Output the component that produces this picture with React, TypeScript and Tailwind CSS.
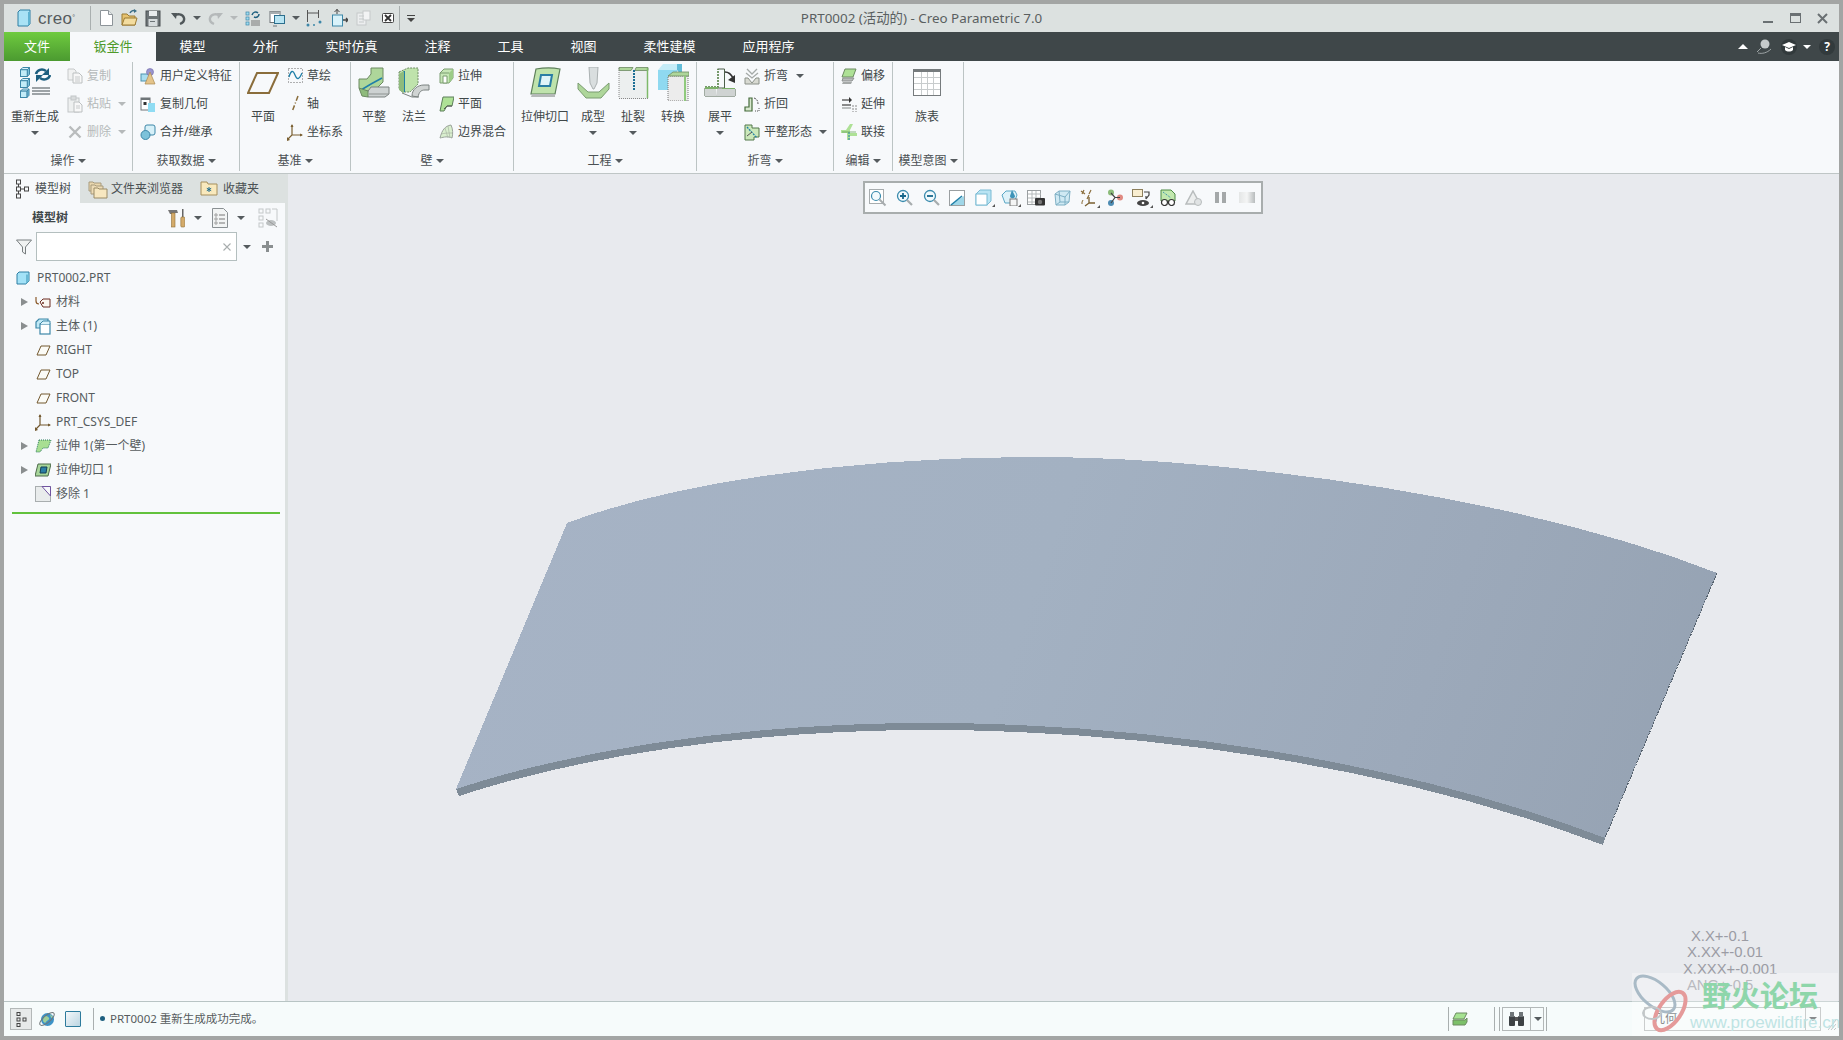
import type { ReactNode } from 'react'

// Creo Parametric 7.0 main window, sheet metal tab

const I = ({ w, h, children }: { w: number; h: number; children: ReactNode }) => (
  <svg width={w} height={h} viewBox={`0 0 ${w} ${h}`} className="block shrink-0">
    {children}
  </svg>
)

const Caret = ({ color = 'border-t-[#555b5e]' }: { color?: string }) => (
  <span className={`inline-block w-0 h-0 border-x-[4px] border-x-transparent border-t-[4px] ${color}`} />
)

const GreyCaret = () => <Caret color="border-t-[#b5b9ba]" />

function Cube({ x, y, s }: { x: number; y: number; s: number }) {
  const d = s * 0.25
  return (
    <g>
      <polygon points={`${x},${y + d} ${x + d},${y} ${x + s},${y} ${x + s - d},${y + d}`} fill="#d9f2fa" stroke="#3d87a8" strokeWidth="1" />
      <polygon points={`${x + s - d},${y + d} ${x + s},${y} ${x + s},${y + s - d} ${x + s - d},${y + s}`} fill="#7cc0da" stroke="#3d87a8" strokeWidth="1" />
      <rect x={x} y={y + d} width={s - d} height={s - d} fill="#c2ecf8" stroke="#3d87a8" strokeWidth="1" />
    </g>
  )
}

/* quick access */
const QaNew = () => (
  <I w={15} h={18}>
    <path d="M1.5 1.5h8l4 4v11h-12z" fill="#fff" stroke="#8d9499" />
    <path d="M9.5 1.5v4h4" fill="#e6eaec" stroke="#8d9499" />
  </I>
)
const QaOpen = () => (
  <I w={17} h={18}>
    <path d="M1 5h5l2 2h6v9H1z" fill="#e6c270" stroke="#9b7a33" />
    <path d="M3.5 9H16l-2 7H1z" fill="#f3dc9f" stroke="#9b7a33" />
    <path d="M9 4c1-2 3-3 5-2" fill="none" stroke="#3b6d85" strokeWidth="1.5" />
    <path d="M13 0l3 2-3 2z" fill="#3b6d85" />
  </I>
)
const QaSave = () => (
  <I w={16} h={18}>
    <rect x="1" y="2" width="14" height="15" fill="#6e7578" stroke="#4a5053" />
    <rect x="4" y="2" width="8" height="5" fill="#e9ecee" />
    <rect x="3.5" y="10" width="9" height="7" fill="#d7dcde" />
    <rect x="5" y="12" width="5" height="1" fill="#6e7578" />
  </I>
)
const Undo = ({ c, flip }: { c: string; flip?: boolean }) => (
  <I w={16} h={16}>
    <g transform={flip ? 'translate(16 0) scale(-1 1)' : undefined}>
      <path d="M4 6c3-3 9-2 10 2 .6 3-1.500 5-4 6" fill="none" stroke={c} strokeWidth="2.4" />
      <path d="M1 3l6 0-1 6z" fill={c} />
    </g>
  </I>
)
const QaRegen = () => (
  <I w={16} h={17}>
    <rect x="1" y="2" width="3" height="3" fill="#9fdcf0" stroke="#3d87a8" strokeWidth=".7" />
    <rect x="1" y="7" width="3" height="3" fill="#9fdcf0" stroke="#3d87a8" strokeWidth=".7" />
    <rect x="1" y="12" width="3" height="3" fill="#9fdcf0" stroke="#3d87a8" strokeWidth=".7" />
    <path d="M6 13h9M6 15h9M6 11h9" stroke="#777" />
    <path d="M7 5c1-3 4-4 6-2M14 4c0 3-3 4-5 3" fill="none" stroke="#1d5f7f" strokeWidth="1.500" />
  </I>
)
const QaWindows = () => (
  <I w={17} h={17}>
    <rect x="1" y="1.500" width="10" height="11" fill="#fff" stroke="#6e7578" />
    <rect x="1" y="1.500" width="10" height="2.500" fill="#a6adb0" />
    <rect x="5.500" y="5.500" width="10" height="8" fill="#b9e5f3" stroke="#2c6f8e" />
    <path d="M4 16h4" stroke="#6e7578" />
  </I>
)
const QaDim = () => (
  <I w={17} h={18}>
    <path d="M1.500 1v12M12.500 1v8M1.500 4h11" stroke="#555" />
    <circle cx="2" cy="16" r="1.500" fill="#3d87a8" />
    <circle cx="8" cy="16" r="1" fill="#3d87a8" />
    <circle cx="14" cy="13" r="1.500" fill="#3d87a8" />
  </I>
)
const QaBox = () => (
  <I w={17} h={18}>
    <rect x="1.500" y="6" width="10" height="11" fill="#d9f2fa" stroke="#3d87a8" />
    <path d="M6 0v5M3.500 3L6 .5 8.500 3" fill="none" stroke="#444" />
    <path d="M12 11h4M15 9l2 2-2 2" fill="none" stroke="#444" strokeWidth="1.300" />
  </I>
)
const QaGhost = () => (
  <I w={17} h={18}>
    <rect x="2" y="4" width="9" height="12" fill="#eceeef" stroke="#c5c9ca" />
    <rect x="8" y="2" width="7" height="9" fill="#f2f3f4" stroke="#c5c9ca" />
    <path d="M4 7h5M4 10h5M4 13h5" stroke="#c5c9ca" />
  </I>
)
const QaClose = () => (
  <I w={12} h={12}>
    <rect x=".5" y="1.500" width="11" height="9" rx="1" fill="#fff" stroke="#444" />
    <path d="M3 3l6 6M9 3l-6 6" stroke="#333" strokeWidth="1.800" />
  </I>
)

/* ribbon: large */
const IcRegenLarge = () => (
  <I w={31} h={31}>
    <Cube x={.5} y={.5} s={9} />
    <Cube x={.5} y={11.500} s={9} />
    <Cube x={.5} y={22} s={8.500} />
    <path d="M12 21h18M12 24h18M12 27h18" stroke="#80878a" strokeWidth="1.300" />
    <path d="M16 7c1-4 6-6 10-3" fill="none" stroke="#1d5f7f" strokeWidth="2.600" />
    <path d="M29 1v7h-7z" fill="#1d5f7f" />
    <path d="M30 8c-1 4-6 6-10 3" fill="none" stroke="#1d5f7f" strokeWidth="2.600" />
    <path d="M16 15V8h7z" fill="#1d5f7f" />
  </I>
)
const IcPlane = () => (
  <I w={32} h={22}>
    <polygon points="10,1 31,1 22,21 1,21" fill="none" stroke="#8a6d3b" strokeWidth="2" />
  </I>
)
const IcFlat = () => (
  <I w={32} h={31}>
    <path d="M1 12h8l4-5V1h12v14l-9 9H4l-3-3z" fill="#aed69a" stroke="#6c8a62" />
    <path d="M3 23l10-6 11-6" fill="none" stroke="#1f7fa8" strokeWidth="1.500" />
    <path d="M8 27l5-7h18v7l-4 3H10z" fill="#cdd2d2" stroke="#7b8280" />
    <path d="M1 21l3 8 6 1V24z" fill="#8fbb7c" stroke="#6c8a62" />
    <path d="M11 27h20" stroke="#8d9391" />
  </I>
)
const IcFlange = () => (
  <I w={32} h={31}>
    <path d="M1 5l9-4h10v16l-8 8H4l-3-3z" fill="#bfe3ac" stroke="#6c8a62" strokeDasharray="2 1" />
    <path d="M6 4v21" stroke="#1f7fa8" strokeWidth="2" />
    <path d="M1 7l5-3v22l-5-3z" fill="#8fbb7c" />
    <path d="M14 29c0-7 6-11 12-11h5v5h-4c-4 0-6 2-7 7z" fill="#d0d4d3" stroke="#7b8280" />
    <path d="M4 26l10 4h7" fill="none" stroke="#7b8280" />
  </I>
)
const IcExtrudeCut = () => (
  <I w={31} h={31}>
    <path d="M6 2c8-1.500 17-1.500 24 0l-5 25H1z" fill="#bfe3ac" stroke="#5d7f5a" strokeWidth="1.200" />
    <path d="M2 27h23v3H1z" fill="#b5b9b8" />
    <path d="M11 8h11l-2 11H9z" fill="#e0f4f9" stroke="#2a7ea5" strokeWidth="2" />
  </I>
)
const IcForming = () => (
  <I w={33} h={32}>
    <path d="M12 0h9l-1 16-3 6h-1l-3-6z" fill="#d9dedf" stroke="#aab0b1" />
    <path d="M1 16l10 9h11l10-9v6l-8 9H9L1 22z" fill="#aed69a" stroke="#7a9c70" />
  </I>
)
const IcRip = () => (
  <I w={31} h={32}>
    <rect x="1" y="1" width="29" height="31" fill="#ecefef" />
    <path d="M1 .5h14l-2 3H1zM18 .5h12v3H17z" fill="#aed69a" stroke="#6c8a62" strokeWidth=".8" />
    <path d="M29.500 1v30" stroke="#7eb96a" strokeWidth="1.500" />
    <path d="M1 31.500h29" stroke="#888" strokeDasharray="1 1" />
    <path d="M1 1v30" stroke="#888" strokeDasharray="1 1" />
    <path d="M16 3v20" stroke="#1d6f95" strokeWidth="2" strokeDasharray="2 1" />
  </I>
)
const IcConvert = () => (
  <I w={32} h={37}>
    <polygon points="1,6 20,6 20,26 1,26" fill="#8fd9f0" />
    <polygon points="1,6 6,0 20,0 20,6" fill="#c5ecf7" />
    <polygon points="20,6 20,0 25,0 25,12" fill="#62bcd8" />
    <rect x="11" y="12" width="20" height="25" fill="#ececec" stroke="#777" strokeDasharray="1 1" />
    <path d="M11 12l5-4h16v4z" fill="#aed69a" stroke="#6c8a62" strokeWidth=".8" />
    <path d="M28 12v25" stroke="#8fc97c" strokeWidth="2" />
  </I>
)
const IcUnbend = () => (
  <I w={32} h={31}>
    <path d="M13.500 2h7v19H1v8h30v-7H20.500" fill="none" stroke="#4d5f4a" />
    <path d="M1 22h11v7H1z" fill="#d2d6d5" />
    <path d="M13 22l7 0 11 0v7H12z" fill="#cfd3d2" />
    <path d="M1 20h13v-18" fill="none" stroke="#4e7b3e" strokeWidth="1.500" strokeDasharray="2 1" />
    <path d="M14 20H1v2h13zM18 22h13v-1H18z" fill="#7cb169" />
    <path d="M21 5c4 0 6 2 8 6" fill="none" stroke="#333" strokeWidth="1.600" />
    <path d="M31 8v8l-7-3z" fill="#333" />
  </I>
)
const IcTable = () => (
  <I w={28} h={27}>
    <rect x=".5" y=".5" width="27" height="26" fill="#fff" stroke="#767b7d" />
    <rect x="0" y="0" width="28" height="3" fill="#767b7d" />
    <path d="M1 8.500h26M1 14.500h26M1 20.500h26" stroke="#c8cccd" />
    <path d="M8.500 3v23M14.500 3v23M20.500 3v23" stroke="#c8cccd" />
  </I>
)

/* ribbon: small */
const IcCopy = () => (
  <I w={16} h={16}>
    <path d="M1 1h6l2 2v9H1z" fill="#f0f1f1" stroke="#c6c9ca" />
    <path d="M6 5h6l3 3v7H6z" fill="#f7f7f7" stroke="#bcc0c1" />
    <path d="M8 9h5M8 11h5M8 13h5" stroke="#c6c9ca" />
  </I>
)
const IcPaste = () => (
  <I w={16} h={18}>
    <rect x="1" y="3" width="11" height="14" fill="#eef0f0" stroke="#c2c6c7" />
    <rect x="4" y="1" width="5" height="4" fill="#d9dcdd" stroke="#c2c6c7" />
    <path d="M7 7h5l3 3v7H7z" fill="#f8f8f8" stroke="#bcc0c1" />
    <path d="M9 11h4M9 13h4" stroke="#c6c9ca" />
  </I>
)
const IcDelete = () => (
  <I w={14} h={14}>
    <path d="M1.500 1.500l11 11M12.500 1.500l-11 11" stroke="#b9bcbd" strokeWidth="2.400" />
  </I>
)
const IcUdf = () => (
  <I w={16} h={17}>
    <rect x="1" y="6" width="9" height="7" fill="#a9def0" stroke="#4e93ae" />
    <circle cx="10" cy="4" r="3.500" fill="#9a95cf" stroke="#6f6aa8" strokeWidth=".6" />
    <path d="M10 4l5 12H5z" fill="#e4c48a" stroke="#a98a51" strokeWidth=".7" />
  </I>
)
const IcCopyGeom = () => (
  <I w={16} h={17}>
    <rect x="1" y="2" width="9" height="12" fill="#fff" stroke="#6e7578" />
    <rect x="1" y="2" width="9" height="2" fill="#6e7578" />
    <rect x="3.500" y="6" width="3" height="3" fill="#333" />
    <rect x="8" y="7" width="7" height="9" fill="#8fdcf3" />
  </I>
)
const IcMerge = () => (
  <I w={16} h={17}>
    <rect x="5" y="1" width="10" height="10" rx="2" fill="#d6f0f8" stroke="#3d87a8" />
    <circle cx="5.500" cy="11" r="4.500" fill="#7cc2da" stroke="#3d87a8" />
  </I>
)
const IcSketch = () => (
  <I w={15} h={16}>
    <rect x=".5" y=".5" width="14" height="14" fill="none" stroke="#666" strokeDasharray="1 2" />
    <path d="M1 9c2-7 4-7 6-2s4 5 7-2" fill="none" stroke="#1f7fa8" strokeWidth="1.300" />
  </I>
)
const IcAxis = () => (
  <I w={15} h={18}>
    <path d="M10 1L4 17" stroke="#8a6d3b" strokeWidth="1.500" strokeDasharray="5 2 1 2" />
  </I>
)
const IcCsys = ({ c = '#7a5f30' }: { c?: string }) => (
  <I w={16} h={17}>
    <path d="M5 1v10l-4 4M5 11h10" fill="none" stroke={c} strokeWidth="1.200" />
    <path d="M3.500 3L5 0l1.500 3zM13 9.500l3 1.500-3 1.500z" fill={c} />
    <path d="M0 13l0 4 3-1z" fill={c} />
  </I>
)
const IcWallExtrude = () => (
  <I w={15} h={16}>
    <path d="M1 5l4-4h9v9l-4 5H1z" fill="#c6e6b6" stroke="#7a9c70" />
    <path d="M4 8h4v7H4z" fill="#fff" stroke="#7a9c70" />
    <path d="M10 5l4-4v9l-4 5z" fill="#9ccc87" />
    <path d="M1 5h9" stroke="#7a9c70" />
  </I>
)
const IcWallPlane = () => (
  <I w={15} h={16}>
    <path d="M4 1h11l-2 9H8l-3 5H1z" fill="#aee196" stroke="#5d7f5a" />
    <path d="M5 13l3-3h5" fill="none" stroke="#555" />
  </I>
)
const IcWallBlend = () => (
  <I w={15} h={16}>
    <path d="M1 14C3 6 6 2 12 1c2 4 2 9 1 13-4-2-8-1-12 0z" fill="#d9efce" stroke="#9aa39a" />
    <path d="M6 4l3 10M9 2l2 12M2 10c4-1 7-1 11-1" fill="none" stroke="#a9b5a5" strokeWidth=".7" />
  </I>
)
const IcBend = () => (
  <I w={16} h={17}>
    <path d="M3 1l5 5 5-5M2 5l6 5 6-5" fill="none" stroke="#a5aaa8" strokeWidth="1.300" />
    <path d="M1 10l3 0 4 5 4-5 3 0v6H1z" fill="#d8dad2" stroke="#8b9189" />
  </I>
)
const IcBendBack = () => (
  <I w={16} h={16}>
    <path d="M1 15V11h4V2h3v13z" fill="#d8e8cf" stroke="#456b3a" strokeWidth="1.200" />
    <path d="M10 2c3 1 4 3 4 6" fill="none" stroke="#555" strokeDasharray="2 1" />
    <path d="M11 15h4v-4" fill="none" stroke="#555" strokeDasharray="1 1" />
  </I>
)
const IcFlatState = () => (
  <I w={16} h={17}>
    <path d="M1 1h7v3h7v9h-5v3H1z" fill="#cbe8ba" stroke="#52784a" />
    <path d="M3 3l10 11" stroke="#1f7fa8" strokeWidth="1.300" strokeDasharray="2 1" />
    <path d="M3 12l5-4" stroke="#555" />
  </I>
)
const IcOffset = () => (
  <I w={16} h={17}>
    <path d="M4 1h11l-3 8H1z" fill="#aee196" stroke="#6c8a62" />
    <path d="M2 10h11l-2 3H1z" fill="#b9bcbb" stroke="#8d9190" />
    <path d="M2 14h9l-1 2H1z" fill="#a5a9a8" />
  </I>
)
const IcExtend = () => (
  <I w={16} h={17}>
    <path d="M1 4h9M1 9h9" stroke="#666" strokeWidth="1.300" />
    <path d="M8 1l3 3-3 3z" fill="#333" />
    <path d="M12 9v7M15 9v7" stroke="#888" strokeDasharray="2 1" />
    <path d="M1 12h9" stroke="#a8adad" strokeWidth="1.500" />
  </I>
)
const IcJoin = () => (
  <I w={16} h={18}>
    <path d="M6 17V10H0V7h5l4-6h3l-3 6v3l7 0v3H9v4z" fill="#aee196" />
    <path d="M8 9v8" stroke="#1f7fa8" strokeDasharray="2 1" />
    <path d="M1 9h14" stroke="#5d9950" strokeWidth=".7" />
  </I>
)

/* tree and panel */
const IcTreeDots = () => (
  <I w={14} h={20}>
    <rect x="1.500" y="1" width="4" height="4" fill="none" stroke="#444" />
    <rect x="1.500" y="8" width="4" height="4" fill="none" stroke="#444" />
    <rect x="1.500" y="15" width="4" height="4" fill="none" stroke="#444" />
    <rect x="9.500" y="8" width="4" height="4" fill="none" stroke="#444" />
    <path d="M3.500 5v3M3.500 12v3M5.500 10h4" stroke="#444" />
  </I>
)
const IcFolders = () => (
  <I w={20} h={20}>
    <path d="M1 3h4l1 1h7v8H1z" fill="#ead7ae" stroke="#a79a7c" />
    <path d="M3 6h4l1 1h7v8H3z" fill="#eedcb6" stroke="#a79a7c" />
    <path d="M6 9h4l1 1h8v9H6z" fill="#f7e7c0" stroke="#9a8b66" />
  </I>
)
const IcFav = () => (
  <I w={18} h={15}>
    <path d="M1 1h6l1 2h9v11H1z" fill="#f9e9bd" stroke="#a68f5c" />
    <path d="M9 6v5M6.800 7.300l4.400 2.400M11.200 7.300L6.800 9.700" stroke="#1d6a8c" strokeWidth="1" />
  </I>
)
const IcTools = () => (
  <I w={17} h={20}>
    <path d="M0 2h9l1 3H5v1H2z" fill="#777" />
    <rect x="3.500" y="5" width="3.500" height="14" fill="#d4ab6a" stroke="#8f6e38" strokeWidth=".6" />
    <rect x="14" y="1" width="1.500" height="8" fill="#666" />
    <rect x="12.800" y="9" width="4" height="10" rx="1" fill="#d4ab6a" stroke="#8f6e38" strokeWidth=".6" />
  </I>
)
const IcDocList = () => (
  <I w={16} h={20}>
    <path d="M.5.5h11l4 4v15H.5z" fill="#f2f4f4" stroke="#8a9093" />
    <circle cx="4" cy="7" r="1.200" fill="none" stroke="#777" strokeWidth=".7" />
    <circle cx="4" cy="11" r="1.200" fill="none" stroke="#777" strokeWidth=".7" />
    <circle cx="4" cy="15" r="1.200" fill="none" stroke="#777" strokeWidth=".7" />
    <path d="M7 7h6M7 11h6M7 15h6" stroke="#777" />
  </I>
)
const IcTreeEye = () => (
  <I w={20} h={20}>
    <g fill="none" stroke="#c4c8c9">
      <rect x="1" y="1" width="4" height="4" />
      <rect x="1" y="8" width="4" height="4" />
      <rect x="1" y="15" width="4" height="4" />
      <rect x="8" y="1" width="4" height="4" />
      <path d="M14 1h5v12" />
    </g>
    <ellipse cx="13" cy="15" rx="5" ry="3" fill="#bcc0c1" />
    <path d="M8 11l11 8" stroke="#999" />
  </I>
)
const IcFunnel = () => (
  <I w={16} h={16}>
    <path d="M.5 1h15L9.500 8v7l-3-2V8z" fill="#f0f2f2" stroke="#787e80" />
  </I>
)
const IcMaterial = () => (
  <I w={16} h={13}>
    <path d="M1 1v4c0 2 1 3 3 3" fill="none" stroke="#8b5a2b" strokeWidth="1.200" />
    <path d="M5 6l3-3h7v8H8z" fill="#fbf6f0" stroke="#6d2d22" />
    <circle cx="8" cy="7" r="1" fill="#6d2d22" />
  </I>
)
const IcBodies = () => (
  <I w={16} h={17}>
    <path d="M1 4l3-3h9v9H1z" fill="#bfe8f5" stroke="#3d87a8" strokeWidth="1.200" />
    <rect x="5" y="6" width="10" height="10" fill="#fff" stroke="#3d87a8" strokeWidth="1.200" />
    <path d="M5 6l3-3h7v3" fill="#d9f2fa" stroke="#3d87a8" />
  </I>
)
const IcTreePlane = () => (
  <I w={15} h={11}>
    <polygon points="5,1 14,1 10,10 1,10" fill="#fbfbf6" stroke="#72582e" strokeWidth="1" />
  </I>
)
const IcTreeExtrude = () => (
  <I w={17} h={14}>
    <path d="M4 1h12l-3 8H8l-3 4H1z" fill="#a8df92" stroke="#2a7a5c" strokeDasharray="1 1" />
  </I>
)
const IcTreeCut = () => (
  <I w={16} h={14}>
    <path d="M3 1h13l-3 12H0z" fill="#a8d69a" stroke="#4d6a4a" />
    <path d="M6 4h6l-1 6H5z" fill="#2a7ea5" stroke="#133f55" />
  </I>
)
const IcRemove = () => (
  <I w={16} h={16}>
    <rect x=".5" y=".5" width="15" height="15" fill="#e9ecec" stroke="#a9aeaf" />
    <path d="M7 .5h8.500V10z" fill="#f7f9fb" stroke="#7154a0" />
  </I>
)

/* graphics toolbar */
const Mag = ({ children }: { children?: ReactNode }) => (
  <I w={17} h={17}>
    <circle cx="7" cy="7" r="5.500" fill="#f2fafd" stroke="#3a8bad" strokeWidth="1.300" />
    <path d="M11 11l5 5" stroke="#a7acae" strokeWidth="2.200" />
    {children}
  </I>
)
const TbItem = ({ children, arrow }: { children: ReactNode; arrow?: boolean }) => (
  <div className="relative w-[26.300px] flex justify-center items-center">
    {children}
    {arrow && (
      <span className="absolute right-[2px] bottom-[-1px] w-0 h-0 border-l-[3px] border-l-transparent border-b-[3px] border-b-[#555]" />
    )}
  </div>
)

const labelFont = "font-['Noto_Sans','Noto_Sans_CJK_SC',sans-serif]"

function Group({ className, label, children }: { className: string; label: string; children: ReactNode }) {
  return (
    <div className={`flex flex-col h-[109px] shrink-0 border-r border-[#bcc4c4] ${className}`}>
      <div className="flex h-[89px]">{children}</div>
      <div className="h-[20px] flex items-center justify-center gap-[3px] text-[12px] text-[#4a5053]">
        <span>{label}</span>
        <Caret />
      </div>
    </div>
  )
}

function Large({ className, icon, label, arrow }: { className: string; icon: ReactNode; label: string; arrow?: boolean }) {
  return (
    <div className={`flex flex-col items-center shrink-0 ${className}`}>
      <div className="h-[41px] flex items-center justify-center">{icon}</div>
      <div className="mt-[5px] h-[18px] leading-[18px] text-[12px] whitespace-nowrap text-[#3f4749]">{label}</div>
      {arrow && (
        <div className="h-[14px] flex items-center">
          <Caret />
        </div>
      )}
    </div>
  )
}

function Small({ icon, label, off, caret }: { icon: ReactNode; label: string; off?: boolean; caret?: string }) {
  return (
    <div className="h-[28px] flex items-center">
      <div className="w-[16px] flex justify-center shrink-0">{icon}</div>
      <span className={`ml-[4px] text-[12px] whitespace-nowrap ${off ? 'text-[#b5b9ba]' : 'text-[#3f4749]'}`}>{label}</span>
      {caret && (
        <span className={`flex ${caret}`}>
          {off ? <GreyCaret /> : <Caret />}
        </span>
      )}
    </div>
  )
}

function TreeRow({ icon, label, arrow }: { icon: ReactNode; label: string; arrow?: boolean }) {
  return (
    <div className="h-[24px] flex items-center text-[12px] text-[#565c5e]">
      <div className="w-[14px] ml-[17px] flex">
        {arrow && (
          <span className="w-0 h-0 border-y-[4.500px] border-y-transparent border-l-[7px] border-l-[#8a8e8f]" />
        )}
      </div>
      <div className="w-[16px] flex justify-center items-center shrink-0">{icon}</div>
      <span className="ml-[5px] whitespace-nowrap">{label}</span>
    </div>
  )
}

const tabs = ['模型', '分析', '实时仿真', '注释', '工具', '视图', '柔性建模', '应用程序']

export default function App() {
  return (
    <div className={`relative w-[1843px] h-[1040px] overflow-hidden border-4 border-[#a3a5a4] flex flex-col ${labelFont}`}>
      {/* Title bar */}
      <div className="h-[28px] shrink-0 bg-[#dce1e0] grid grid-cols-[1fr_auto_1fr] items-center">
        <div className="flex items-center h-full">
          <div className="ml-[13px]">
            <I w={14} h={18}>
              <path d="M1 3l2-2h10v14l-2 2H1z" fill="#a9e2f5" stroke="#2f7ea3" />
              <path d="M11 3h2v12l-2 2z" fill="#5fb3d1" />
            </I>
          </div>
          <span className="ml-[7px] w-[42px] text-[17px] leading-none text-[#555b5e] font-['Liberation_Sans',sans-serif] tracking-[.3px]">
            creo<sup className="text-[7px]">°</sup>
          </span>
          <span className="ml-[10px] w-px h-[24px] bg-[#a9afaf]" />
          <div className="ml-[8px]"><QaNew /></div>
          <div className="ml-[7px]"><QaOpen /></div>
          <div className="ml-[7px]"><QaSave /></div>
          <div className="ml-[9px]"><Undo c="#50575a" /></div>
          <div className="ml-[7px] flex"><Caret /></div>
          <div className="ml-[7px]"><Undo c="#b5b9ba" flip /></div>
          <div className="ml-[6px] flex"><GreyCaret /></div>
          <div className="ml-[7px]"><QaRegen /></div>
          <div className="ml-[8px]"><QaWindows /></div>
          <div className="ml-[6px] flex"><Caret /></div>
          <div className="ml-[6px]"><QaDim /></div>
          <div className="ml-[8px]"><QaBox /></div>
          <div className="ml-[7px]"><QaGhost /></div>
          <div className="ml-[10px]"><QaClose /></div>
          <span className="ml-[5px] w-px h-[24px] bg-[#a9afaf]" />
          <div className="ml-[7px] flex flex-col items-center gap-[2px]">
            <span className="w-[8px] h-px bg-[#444]" />
            <Caret color="border-t-[#444]" />
          </div>
        </div>
        <div className="text-[13.400px] text-[#5a5f60] whitespace-nowrap">PRT0002 (活动的) - Creo Parametric 7.0</div>
        <div className="flex justify-end items-center h-full pr-[11px] gap-[16px]">
          <span className="w-[10px] h-[2px] bg-[#6a7073] mt-[8px] mr-px" />
          <span className="w-[11px] h-[10px] border border-[#6a7073] border-t-[3px]" />
          <svg width="11" height="11" viewBox="0 0 11 11" className="block">
            <path d="M1 1l9 9M10 1l-9 9" stroke="#6a7073" strokeWidth="2" />
          </svg>
        </div>
      </div>

      {/* Menu tabs */}
      <div className="h-[29px] shrink-0 bg-[#3f4749] flex items-stretch text-[13px]">
        <div className="w-[66px] flex items-center justify-center bg-gradient-to-b from-[#6fcb3f] to-[#4b9a30] text-white">文件</div>
        <div className="w-[86px] flex items-center justify-center bg-[#f7f9fb] text-[#4e9a2a]">钣金件</div>
        {tabs.map((t) => (
          <div key={t} className="px-[23.500px] flex items-center text-white whitespace-nowrap">
            {t}
          </div>
        ))}
        <div className="ml-auto flex items-center pr-[4px]">
          <span className="w-0 h-0 border-x-[5.500px] border-x-transparent border-b-[5.500px] border-b-white" />
          <div className="ml-[8px]">
            <I w={16} h={15}>
              <circle cx="9" cy="5" r="4.500" fill="#c5cacb" />
              <path d="M5 9L1 13M2 14c4 1 9 0 13-4" fill="none" stroke="#9ea5a6" />
            </I>
          </div>
          <div className="ml-[9px] w-[16px] h-[16px] rounded-full bg-[#323a3c] flex items-center justify-center">
            <I w={14} h={12}>
              <path d="M7 1l7 3-7 3-7-3z" fill="#fff" />
              <path d="M3 6v3c2 2 6 2 8 0V6L7 8z" fill="#fff" />
            </I>
          </div>
          <div className="ml-[6px] flex"><Caret color="border-t-white" /></div>
          <div className="ml-[8px] w-[16px] h-[16px] rounded-full bg-[#323a3c] flex items-center justify-center text-white text-[12px] font-bold leading-none">?</div>
        </div>
      </div>

      {/* Ribbon */}
      <div className="h-[113px] shrink-0 bg-[#f7f9fb] border-b border-[#bfc6c6] pt-px flex">
        <Group className="w-[129px]" label="操作">
          <div className="flex pl-[7px]">
            <Large className="w-[48px]" icon={<IcRegenLarge />} label="重新生成" arrow />
            <div className="ml-[8px]">
              <Small icon={<IcCopy />} label="复制" off />
              <Small icon={<IcPaste />} label="粘贴" off caret="ml-[7px]" />
              <Small icon={<IcDelete />} label="删除" off caret="ml-[7px]" />
            </div>
          </div>
        </Group>
        <Group className="w-[107px]" label="获取数据">
          <div className="pl-[7px]">
            <Small icon={<IcUdf />} label="用户定义特征" />
            <Small icon={<IcCopyGeom />} label="复制几何" />
            <Small icon={<IcMerge />} label="合并/继承" />
          </div>
        </Group>
        <Group className="w-[111px]" label="基准">
          <div className="flex pl-[7px]">
            <Large className="w-[32px]" icon={<IcPlane />} label="平面" />
            <div className="ml-[8px]">
              <Small icon={<IcSketch />} label="草绘" />
              <Small icon={<IcAxis />} label="轴" />
              <Small icon={<IcCsys />} label="坐标系" />
            </div>
          </div>
        </Group>
        <Group className="w-[163px]" label="壁">
          <div className="flex pl-[7px]">
            <Large className="w-[32px]" icon={<IcFlat />} label="平整" />
            <Large className="w-[32px] ml-[8px]" icon={<IcFlange />} label="法兰" />
            <div className="ml-[8px]">
              <Small icon={<IcWallExtrude />} label="拉伸" />
              <Small icon={<IcWallPlane />} label="平面" />
              <Small icon={<IcWallBlend />} label="边界混合" />
            </div>
          </div>
        </Group>
        <Group className="w-[183px]" label="工程">
          <div className="flex pl-[7px]">
            <Large className="w-[48px]" icon={<IcExtrudeCut />} label="拉伸切口" />
            <Large className="w-[32px] ml-[8px]" icon={<IcForming />} label="成型" arrow />
            <Large className="w-[32px] ml-[8px]" icon={<IcRip />} label="扯裂" arrow />
            <Large className="w-[32px] ml-[8px]" icon={<IcConvert />} label="转换" />
          </div>
        </Group>
        <Group className="w-[137px]" label="折弯">
          <div className="flex pl-[7px]">
            <Large className="w-[32px]" icon={<IcUnbend />} label="展平" arrow />
            <div className="ml-[8px]">
              <Small icon={<IcBend />} label="折弯" caret="ml-[8px]" />
              <Small icon={<IcBendBack />} label="折回" />
              <Small icon={<IcFlatState />} label="平整形态" caret="ml-[7px]" />
            </div>
          </div>
        </Group>
        <Group className="w-[59px]" label="编辑">
          <div className="pl-[7px]">
            <Small icon={<IcOffset />} label="偏移" />
            <Small icon={<IcExtend />} label="延伸" />
            <Small icon={<IcJoin />} label="联接" />
          </div>
        </Group>
        <Group className="w-[71px]" label="模型意图">
          <div className="pl-[18px]">
            <Large className="w-[32px]" icon={<IcTable />} label="族表" />
          </div>
        </Group>
      </div>

      {/* Main */}
      <div className="flex-1 flex min-h-0">
        <div className="w-[281px] shrink-0 bg-[#f7f9fb] flex flex-col">
          <div className="h-[29px] bg-[#dce1e0] flex text-[12px] text-[#4a5053]">
            <div className="w-[76px] bg-[#f7f9fb] flex items-center pl-[11px]">
              <IcTreeDots />
              <span className="ml-[6px]">模型树</span>
            </div>
            <div className="flex items-center ml-[8px]">
              <IcFolders />
              <span className="ml-[3px]">文件夹浏览器</span>
            </div>
            <div className="flex items-center ml-[17px]">
              <IcFav />
              <span className="ml-[5px]">收藏夹</span>
            </div>
          </div>
          <div className="h-[29px] flex items-center text-[12px] text-[#3f4749] font-semibold">
            <span className="ml-[28px]">模型树</span>
            <div className="ml-[100px]"><IcTools /></div>
            <div className="ml-[9px] flex"><Caret /></div>
            <div className="ml-[10px]"><IcDocList /></div>
            <div className="ml-[9px] flex"><Caret /></div>
            <div className="ml-[13px]"><IcTreeEye /></div>
          </div>
          <div className="h-[29px] flex items-center">
            <div className="ml-[12px]"><IcFunnel /></div>
            <div className="ml-[4px] w-[201px] h-[29px] bg-white border border-[#b4bfbf] flex items-center justify-end pr-[5px]">
              <svg width="8" height="8" viewBox="0 0 8 8" className="block">
                <path d="M.5.5l7 7M7.500.5l-7 7" stroke="#a8adae" strokeWidth="1.100" />
              </svg>
            </div>
            <div className="ml-[6px] flex"><Caret /></div>
            <span className="ml-[11px] text-[#8a8f90] relative w-[11px] h-[11px]">
              <span className="absolute left-0 top-[4px] w-[11px] h-[3px] bg-[#8a8f90]" />
              <span className="absolute left-[4px] top-0 w-[3px] h-[11px] bg-[#8a8f90]" />
            </span>
          </div>
          <div className="mt-[5px]">
            <div className="h-[24px] flex items-center text-[12px] text-[#565c5e]">
              <div className="ml-[12px]">
                <I w={14} h={14}>
                  <path d="M1 3l2-2h10v9l-3 3H1z" fill="#a3e2f7" stroke="#2f7ea3" />
                  <path d="M10 3.500h3V10l-3 3z" fill="#6ab9d4" />
                </I>
              </div>
              <span className="ml-[7px]">PRT0002.PRT</span>
            </div>
            <TreeRow arrow icon={<IcMaterial />} label="材料" />
            <TreeRow arrow icon={<IcBodies />} label="主体 (1)" />
            <TreeRow icon={<IcTreePlane />} label="RIGHT" />
            <TreeRow icon={<IcTreePlane />} label="TOP" />
            <TreeRow icon={<IcTreePlane />} label="FRONT" />
            <TreeRow icon={<IcCsys c="#72582e" />} label="PRT_CSYS_DEF" />
            <TreeRow arrow icon={<IcTreeExtrude />} label="拉伸 1(第一个壁)" />
            <TreeRow arrow icon={<IcTreeCut />} label="拉伸切口 1" />
            <TreeRow icon={<IcRemove />} label="移除 1" />
          </div>
          <div className="mt-[6px] ml-[8px] mr-[5px] h-[2px] bg-[#62c23c]" />
        </div>
        <div className="w-[3px] shrink-0 bg-[#dce1e0]" />

        {/* Graphics area */}
        <div className="relative flex-1 bg-[#e8eaee]">
          <svg className="absolute inset-0" width="1551" height="827" viewBox="288 174 1551 827" shapeRendering="crispEdges">
            <defs>
              <linearGradient id="sheet" gradientUnits="userSpaceOnUse" x1="456" y1="620" x2="1717" y2="1063">
                <stop offset="0" stopColor="#a6b3c5" />
                <stop offset="0.4" stopColor="#a3b1c2" />
                <stop offset="0.7" stopColor="#9ca9ba" />
                <stop offset="1" stopColor="#93a0b0" />
              </linearGradient>
            </defs>
            <path d="M456 789 L459 796 C593 752 763 730 929 730 C1150 730 1398 767 1603 845 L1605 838 C1400 760 1150 723 929 723 C760 723 590 745 456 789 Z" fill="#7e8b97" />
            <path d="M567 523 C680 480 860 457 1037 457 C1220 457 1520 495 1717 573 L1605 838 C1400 760 1150 723 929 723 C760 723 590 745 456 789 Z" fill="url(#sheet)" />
            <path d="M1717 573 L1605 838" stroke="#55616d" strokeWidth="1" strokeDasharray="2 1" fill="none" />
          </svg>
          <div className="absolute left-1/2 -translate-x-1/2 -ml-px top-[7px] h-[33px] w-[400px] bg-[#f7f9fb] border-2 border-[#a8adad] flex items-center justify-center">
            <TbItem>
              <I w={18} h={18}>
                <rect x=".5" y=".5" width="14" height="14" fill="#fff" stroke="#a7acae" />
                <circle cx="7" cy="7" r="4.500" fill="#f2fafd" stroke="#3a8bad" strokeWidth="1.200" />
                <path d="M10.500 10.500l6 6" stroke="#a7acae" strokeWidth="2" />
              </I>
            </TbItem>
            <TbItem>
              <Mag><path d="M4 7h6M7 4v6" stroke="#17678c" strokeWidth="1.800" /></Mag>
            </TbItem>
            <TbItem>
              <Mag><path d="M4 7h6" stroke="#17678c" strokeWidth="1.800" /></Mag>
            </TbItem>
            <TbItem>
              <I w={16} h={16}>
                <rect x=".5" y=".5" width="15" height="15" fill="#fff" stroke="#9a9fa1" />
                <path d="M1 15L15 6v9z" fill="#9fd6e8" />
                <path d="M2 15L13 6" stroke="#1f7fa8" strokeWidth="1.500" />
              </I>
            </TbItem>
            <TbItem arrow>
              <I w={17} h={17}>
                <path d="M1 5l4-4h11v11l-4 4H1z" fill="#b9e4f3" stroke="#7bbbd4" />
                <rect x="1" y="5" width="11" height="11" fill="#fff" stroke="#7bbbd4" />
              </I>
            </TbItem>
            <TbItem arrow>
              <I w={17} h={17}>
                <path d="M1 6l4-4h9l2 4-3 8H4z" fill="#dff2f9" stroke="#5ba7c5" />
                <path d="M11 1l3 6c0 3-5 3-5 0z" fill="#3d93b8" />
                <rect x="9" y="10" width="7" height="7" fill="#f4f5f5" stroke="#777" />
              </I>
            </TbItem>
            <TbItem>
              <I w={18} h={16}>
                <rect x=".5" y=".5" width="13" height="14" fill="#fff" stroke="#9a9fa1" />
                <path d="M1 4h13M1 8h12M1 12h8M5 1v13M9 1v8" stroke="#b5babb" />
                <rect x="8" y="8" width="10" height="7.500" rx="1" fill="#333" />
                <circle cx="13" cy="12" r="2.200" fill="#777" />
              </I>
            </TbItem>
            <TbItem>
              <I w={17} h={16}>
                <path d="M1 4l4-3h11l-1 11-4 3H2z" fill="#cfe9f3" stroke="#7dafc4" />
                <path d="M5 1l1 11-4 3M6 12h9M1 4l10 3 5-6M11 7v8" fill="none" stroke="#7dafc4" />
              </I>
            </TbItem>
            <TbItem arrow>
              <I w={17} h={18}>
                <path d="M1 2l4 3M4 1L2 5M11 1l-2 4M7 10l2-4" stroke="#8a6d3b" strokeWidth="1.200" />
                <path d="M9 8v6h6M9 14l-4 3" fill="none" stroke="#7a5f30" strokeWidth="1.300" />
                <path d="M1 14h2M3 11l-1 2" stroke="#8a6d3b" />
              </I>
            </TbItem>
            <TbItem>
              <I w={16} h={17}>
                <circle cx="4" cy="3.500" r="3" fill="#8cbc7a" />
                <circle cx="13" cy="8.500" r="3" fill="#e08a82" />
                <circle cx="4" cy="14" r="3" fill="#4d8cb3" />
                <path d="M4 4l4 4.500h5M8 8.500L4 14" fill="none" stroke="#444" strokeWidth="1.200" />
              </I>
            </TbItem>
            <TbItem arrow>
              <I w={18} h={18}>
                <rect x=".5" y=".5" width="10" height="7" fill="#f9eed0" stroke="#8d7f5c" />
                <path d="M12 3h5v3l-3 4M14 7v3" fill="none" stroke="#444" strokeWidth="1.200" />
                <ellipse cx="11" cy="14" rx="6" ry="3" fill="#444" />
                <circle cx="11" cy="14" r="1.300" fill="#fff" />
              </I>
            </TbItem>
            <TbItem>
              <I w={16} h={17}>
                <path d="M1 1h10l4 4v7H1z" fill="#c2e8ae" stroke="#4c8a45" />
                <path d="M3 3l8 6" stroke="#1f7fa8" strokeDasharray="1 1" />
                <circle cx="4.500" cy="13.500" r="3" fill="#fff" stroke="#333" strokeWidth="1.200" />
                <circle cx="11.500" cy="13.500" r="3" fill="#fff" stroke="#333" strokeWidth="1.200" />
              </I>
            </TbItem>
            <TbItem>
              <I w={17} h={16}>
                <path d="M8 1l7 13H1z" fill="#eceeee" stroke="#b8bcbd" strokeWidth="1.500" />
                <circle cx="13" cy="12" r="3.500" fill="#e0e3e4" stroke="#b8bcbd" />
              </I>
            </TbItem>
            <TbItem>
              <div className="flex gap-[3px]">
                <span className="w-[4px] h-[11px] bg-[#a4a8a9]" />
                <span className="w-[4px] h-[11px] bg-[#a4a8a9]" />
              </div>
            </TbItem>
            <TbItem>
              <span className="w-[16px] h-[11px] bg-gradient-to-r from-[#e4e6e6] via-[#f4f5f5] to-[#b8bcbd]" />
            </TbItem>
          </div>
          <div className="absolute left-[1395px] top-[754px] text-[14.800px] leading-[16.400px] text-[#9b9ca4] font-['Liberation_Sans',sans-serif] whitespace-nowrap">
            <div className="ml-[8px]">X.X+-0.1</div>
            <div className="ml-[4px]">X.XX+-0.01</div>
            <div>X.XXX+-0.001</div>
            <div className="ml-[4px]">ANG+-0.5</div>
          </div>
        </div>
      </div>

      {/* Status bar */}
      <div className="h-[35px] shrink-0 bg-[#f6fbfb] border-t border-[#b8c4c4] flex items-center">
        <div className="ml-[6px] w-[22px] h-[22px] bg-[#e7eaea] border border-[#b3b8b8] flex items-center justify-center">
          <I w={11} h={15}>
            <rect x="1" y=".5" width="3" height="3" fill="none" stroke="#444" />
            <rect x="1" y="6" width="3" height="3" fill="none" stroke="#444" />
            <rect x="1" y="11.500" width="3" height="3" fill="none" stroke="#444" />
            <rect x="7" y="6" width="3" height="3" fill="none" stroke="#444" />
          </I>
        </div>
        <div className="ml-[7px]">
          <I w={16} h={16}>
            <circle cx="8.500" cy="8.500" r="6.500" fill="#3d93c7" />
            <path d="M5 5c2 0 4 0 5 2s-2 2-3 4-3 0-3-2zM11 3l3 3-2 1z" fill="#9fcf9a" />
            <ellipse cx="8" cy="8" rx="9" ry="3.500" transform="rotate(-40 8 8)" fill="none" stroke="#6f7779" />
          </I>
        </div>
        <div className="ml-[10px] w-[16px] h-[16px] border border-[#2d7b9c] bg-gradient-to-br from-[#f4f8fa] to-[#bcd6e2] rounded-[1px]" />
        <span className="ml-[12px] w-px h-[22px] bg-[#a9afaf]" />
        <span className="ml-[6px] w-[5px] h-[5px] rounded-full bg-[#1d5f7f] mb-[2px]" />
        <span className="ml-[5px] text-[11.500px] text-[#565c5e] whitespace-nowrap">PRT0002 重新生成成功完成。</span>
        <span className="ml-auto w-px h-[24px] bg-[#a9afaf]" />
        <div className="ml-[3px]">
          <I w={16} h={14}>
            <path d="M4 1h11l-3 6H1z" fill="#a6e392" stroke="#6c8a62" />
            <path d="M1 8h12l2-2v4l-2 3H1z" fill="#7cc069" stroke="#6c8a62" />
          </I>
        </div>
        <span className="ml-[26px] w-px h-[24px] bg-[#a9afaf]" />
        <span className="ml-[4px] w-px h-[24px] bg-[#a9afaf]" />
        <div className="ml-[2px] w-[42px] h-[24px] border border-[#b3b8b8] flex items-center">
          <div className="ml-[5px]">
            <I w={17} h={16}>
              <rect x="1" y="5" width="6" height="10" rx="1" fill="#3d4245" />
              <rect x="10" y="5" width="6" height="10" rx="1" fill="#3d4245" />
              <rect x="2" y="1" width="4" height="5" fill="#6e7578" />
              <rect x="11" y="1" width="4" height="5" fill="#6e7578" />
              <rect x="7" y="6" width="3" height="4" fill="#555" />
            </I>
          </div>
          <span className="ml-[5px] w-px h-full bg-[#b3b8b8]" />
          <div className="ml-[3px] flex"><Caret /></div>
        </div>
        <span className="ml-[2px] w-px h-[24px] bg-[#a9afaf]" />
        <div className="ml-[97px] w-[177px] h-[24px] border border-[#b3b8b8] flex items-center">
          <span className="ml-[8px] text-[12px] text-[#565c5e]">几何</span>
          <span className="ml-auto w-px h-full bg-[#b3b8b8]" />
          <div className="mx-[3px] flex"><Caret /></div>
        </div>
        <div className="ml-[7px] mr-[3px] mt-[11px]">
          <svg width="8" height="12" viewBox="0 0 8 12" className="block">
            <path d="M8 1L0 11M8 5L3 11M8 9L6 11" stroke="#aab0b0" />
          </svg>
        </div>
      </div>

      {/* Forum watermark */}
      <div className="absolute right-px bottom-0 w-[206px] h-[63px] bg-white/30 pointer-events-none">
        <svg width="60" height="62" viewBox="0 0 60 62" className="absolute left-0 top-0">
          <ellipse cx="23" cy="21" rx="24" ry="12" transform="rotate(40 23 21)" fill="none" stroke="#a9bac6" strokeWidth="3" />
          <ellipse cx="38" cy="38" rx="22" ry="11" transform="rotate(-55 38 38)" fill="none" stroke="#e59a9a" strokeWidth="4" />
          <ellipse cx="20" cy="40" rx="9" ry="6" fill="none" stroke="#c2c7c9" strokeWidth="2" />
        </svg>
        <div className="absolute left-[70px] top-[5px] text-[29px] leading-[32px] font-bold text-[#8ed6aa] whitespace-nowrap font-['Noto_Sans_CJK_SC',sans-serif]">
          野火论坛
        </div>
        <div className="absolute left-[58px] top-[38px] text-[17px] leading-[24px] text-[#bfe4e4] whitespace-nowrap font-['Liberation_Sans',sans-serif]">
          www.proewildfire.cn
        </div>
      </div>
    </div>
  )
}
